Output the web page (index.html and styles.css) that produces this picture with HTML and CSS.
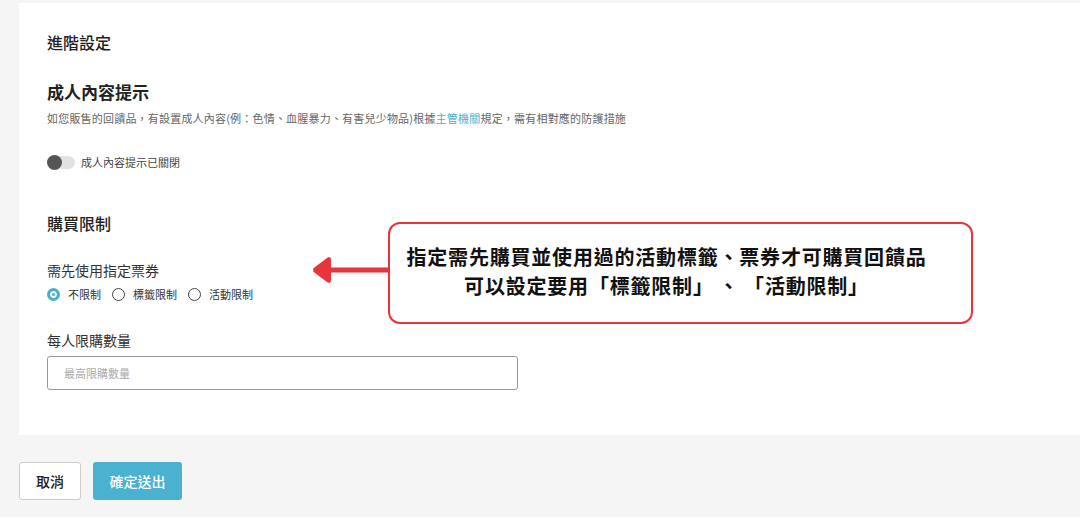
FILE: index.html
```html
<!DOCTYPE html>
<html lang="zh-Hant">
<head>
    <meta charset="UTF-8">
    <meta name="viewport" content="width=device-width, initial-scale=1.0">
    <title>進階設定</title>
    <link rel="stylesheet" href="styles.css">
</head>
<body>
    <div class="page">
        <div class="card">
            <h2 class="section-title">進階設定</h2>

            <!-- Adult content -->
            <h3 class="block-title">成人內容提示</h3>
            <p class="desc">如您販售的回饋品，有設置成人內容(例：色情、血腥暴力、有害兒少物品)根據<a href="#" class="link">主管機關</a>規定，需有相對應的防護措施</p>
            <label class="switch-row">
                <span class="switch"><span class="knob"></span></span>
                <span class="switch-label">成人內容提示已關閉</span>
            </label>

            <!-- Purchase limits -->
            <h2 class="section-title purchase-title">購買限制</h2>
            <div class="field-label">需先使用指定票券</div>
            <div class="radio-row">
                <label class="radio"><span class="dot checked"></span>不限制</label>
                <label class="radio"><span class="dot"></span>標籤限制</label>
                <label class="radio"><span class="dot"></span>活動限制</label>
            </div>

            <div class="field-label qty-label">每人限購數量</div>
            <input type="text" class="text-input" placeholder="最高限購數量">
        </div>

        <div class="actions">
            <button class="btn btn-cancel">取消</button>
            <button class="btn btn-submit">確定送出</button>
        </div>
    </div>

    <!-- annotation callout -->
    <div class="note">
        <svg class="note-arrow" width="80" height="30" viewBox="0 0 80 30">
            <path d="M18 13.5 H78 V18.5 H18 Z" fill="#e8343b"/>
            <path d="M4 16 Q2 16 4 13.8 L17 4 Q21 1.5 21 6 V26 Q21 30.5 17 28 L4 18.2 Q2 16 4 16 Z" fill="#e8343b"/>
        </svg>
        <div class="note-box">
            <p>指定需先購買並使用過的活動標籤、票券才可購買回饋品</p>
            <p>可以設定要用「標籤限制」&thinsp;、&thinsp;「活動限制」</p>
        </div>
    </div>
</body>
</html>
```

FILE: styles.css
```css
body {
    margin: 0;
    padding: 0;
    background-color: #fff;
    font-family: "Noto Sans CJK TC", "Noto Sans", sans-serif;
    color: #222;
}
.page {
    background-color: #f5f5f5;
    padding: 3px 0 17px 19px;
}
.card {
    background-color: #fff;
    padding: 28px 28px 45px;
    display: flex;
    flex-direction: column;
    align-items: flex-start;
}
.section-title {
    margin: 0;
    font-size: 16px;
    line-height: 22px;
    font-weight: 500;
}
.block-title {
    margin: 27px 0 0;
    font-size: 17px;
    line-height: 24px;
    font-weight: 600;
}
.desc {
    margin: 6px 0 0;
    font-size: 11px;
    line-height: 16px;
    letter-spacing: 0.2px;
    color: #666;
}
.link {
    color: #4aafcf;
    text-decoration: none;
}
.switch-row {
    margin-top: 28px;
    display: flex;
    align-items: center;
    height: 16px;
}
.switch {
    position: relative;
    width: 28px;
    height: 13px;
    border-radius: 7px;
    background-color: #e2e2e2;
}
.knob {
    position: absolute;
    left: 0;
    top: -1px;
    width: 15px;
    height: 15px;
    border-radius: 50%;
    background-color: #555;
}
.switch-label {
    margin-left: 6px;
    font-size: 11px;
    color: #444;
}
.purchase-title {
    margin-top: 42px;
}
.field-label {
    margin-top: 26px;
    font-size: 14px;
    line-height: 20px;
    color: #333;
}
.radio-row {
    margin-top: 6px;
    display: flex;
    align-items: center;
    height: 16px;
    gap: 11px;
}
.radio {
    display: flex;
    align-items: center;
    font-size: 11px;
    color: #333;
}
.dot {
    box-sizing: border-box;
    width: 13px;
    height: 13px;
    border-radius: 50%;
    border: 1.5px solid #444;
    margin-right: 8px;
}
.dot.checked {
    border: 3px solid #4aafcf;
    background-color: #4aafcf;
    box-shadow: inset 0 0 0 2px #fff;
}
.qty-label {
    margin-top: 28px;
}
.text-input {
    box-sizing: border-box;
    margin-top: 6px;
    width: 471px;
    height: 34px;
    padding: 0 16px;
    border: 1px solid #999;
    border-radius: 3px;
    font-family: inherit;
    font-size: 11px;
    color: #333;
}
.text-input::placeholder {
    color: #aaa;
}
.actions {
    margin-top: 27px;
    display: flex;
    gap: 12px;
}
.btn {
    height: 38px;
    border-radius: 3px;
    font-family: inherit;
    font-size: 14px;
    font-weight: 500;
    cursor: pointer;
}
.btn-cancel {
    width: 62px;
    background-color: #fff;
    border: 1px solid #ccc;
    color: #222;
}
.btn-submit {
    width: 89px;
    background-color: #4bb1d0;
    border: none;
    color: #fff;
}
.note {
    position: absolute;
    left: 310px;
    top: 222px;
    display: flex;
    align-items: center;
}
.note-arrow {
    display: block;
    margin-top: -8px;
}
.note-box {
    box-sizing: border-box;
    margin-left: -2px;
    width: 585px;
    height: 102px;
    border: 2.5px solid #e8343b;
    border-radius: 12px;
    display: flex;
    flex-direction: column;
    justify-content: center;
    align-items: center;
    padding: 0 28px 4px 0;
}
.note-box p {
    margin: 0;
    font-size: 20px;
    line-height: 29px;
    font-weight: 700;
    letter-spacing: 0.8px;
    color: #111;
}
```
